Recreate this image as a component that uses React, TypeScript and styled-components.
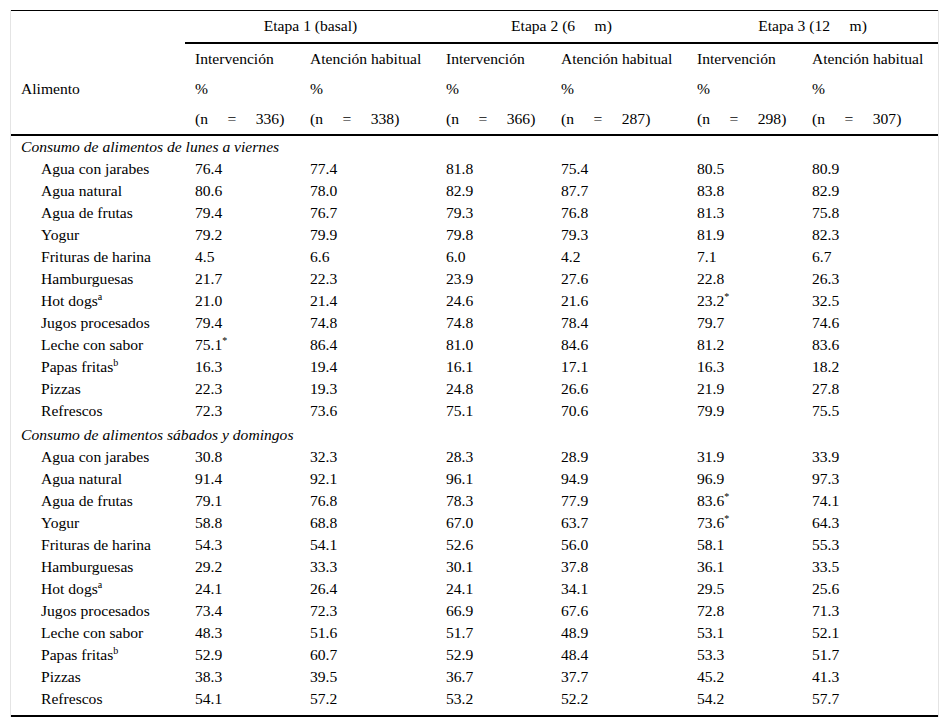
import styled, { createGlobalStyle } from "styled-components";

const GlobalStyle = createGlobalStyle`
  html, body {
    margin: 0;
    padding: 0;
    background: #ffffff;
  }
  body {
    font-family: "Liberation Serif", "Times New Roman", serif;
    color: #000000;
  }
`;

const Page = styled.div`
  padding: 10px 10px 0 10px;
  width: 949px;
  box-sizing: border-box;
`;

const Frame = styled.div`
  border-left: 1px solid #e4e4e4;
  border-right: 1px solid #e4e4e4;
`;

const Table = styled.table`
  width: 100%;
  border-collapse: collapse;
  font-size: 15.6px;
  line-height: 18px;
  border-top: 1px solid #000;
  border-bottom: 2px solid #000;
  table-layout: fixed;

  tbody tr:last-child td {
    padding-bottom: 7px;
  }
`;

const HeadCell = styled.th<{ $center?: boolean; $rule?: boolean; $top?: boolean }>`
  font-weight: normal;
  text-align: ${(p) => (p.$center ? "center" : "left")};
  vertical-align: middle;
  padding: ${(p) => (p.$top ? "6px 10px 7px" : "6px 10px")};
  height: 18px;
  white-space: pre;
  border-bottom: ${(p) => (p.$rule ? "2px solid #000" : "none")};
`;

const HeadRow = styled.tr<{ $last?: boolean }>`
  border-bottom: ${(p) => (p.$last ? "2px solid #000" : "none")};
`;

const SectionCell = styled.td<{ $gap?: boolean }>`
  font-style: italic;
  padding: ${(p) => (p.$gap ? "4px" : "2px")} 10px 2px 10px;
`;

const Cell = styled.td`
  padding: 2px 10px;
  white-space: nowrap;
`;

const LabelCell = styled(Cell)`
  padding-left: 30px;
`;

const Sup = styled.sup`
  font-size: 10px;
  line-height: 0;
  vertical-align: 6px;
`;

type Row = { name: string; mark?: string; values: string[] };

const weekdays: Row[] = [
  { name: "Agua con jarabes", values: ["76.4", "77.4", "81.8", "75.4", "80.5", "80.9"] },
  { name: "Agua natural", values: ["80.6", "78.0", "82.9", "87.7", "83.8", "82.9"] },
  { name: "Agua de frutas", values: ["79.4", "76.7", "79.3", "76.8", "81.3", "75.8"] },
  { name: "Yogur", values: ["79.2", "79.9", "79.8", "79.3", "81.9", "82.3"] },
  { name: "Frituras de harina", values: ["4.5", "6.6", "6.0", "4.2", "7.1", "6.7"] },
  { name: "Hamburguesas", values: ["21.7", "22.3", "23.9", "27.6", "22.8", "26.3"] },
  { name: "Hot dogs", mark: "a", values: ["21.0", "21.4", "24.6", "21.6", "23.2*", "32.5"] },
  { name: "Jugos procesados", values: ["79.4", "74.8", "74.8", "78.4", "79.7", "74.6"] },
  { name: "Leche con sabor", values: ["75.1*", "86.4", "81.0", "84.6", "81.2", "83.6"] },
  { name: "Papas fritas", mark: "b", values: ["16.3", "19.4", "16.1", "17.1", "16.3", "18.2"] },
  { name: "Pizzas", values: ["22.3", "19.3", "24.8", "26.6", "21.9", "27.8"] },
  { name: "Refrescos", values: ["72.3", "73.6", "75.1", "70.6", "79.9", "75.5"] },
];

const weekend: Row[] = [
  { name: "Agua con jarabes", values: ["30.8", "32.3", "28.3", "28.9", "31.9", "33.9"] },
  { name: "Agua natural", values: ["91.4", "92.1", "96.1", "94.9", "96.9", "97.3"] },
  { name: "Agua de frutas", values: ["79.1", "76.8", "78.3", "77.9", "83.6*", "74.1"] },
  { name: "Yogur", values: ["58.8", "68.8", "67.0", "63.7", "73.6*", "64.3"] },
  { name: "Frituras de harina", values: ["54.3", "54.1", "52.6", "56.0", "58.1", "55.3"] },
  { name: "Hamburguesas", values: ["29.2", "33.3", "30.1", "37.8", "36.1", "33.5"] },
  { name: "Hot dogs", mark: "a", values: ["24.1", "26.4", "24.1", "34.1", "29.5", "25.6"] },
  { name: "Jugos procesados", values: ["73.4", "72.3", "66.9", "67.6", "72.8", "71.3"] },
  { name: "Leche con sabor", values: ["48.3", "51.6", "51.7", "48.9", "53.1", "52.1"] },
  { name: "Papas fritas", mark: "b", values: ["52.9", "60.7", "52.9", "48.4", "53.3", "51.7"] },
  { name: "Pizzas", values: ["38.3", "39.5", "36.7", "37.7", "45.2", "41.3"] },
  { name: "Refrescos", values: ["54.1", "57.2", "53.2", "52.2", "54.2", "57.7"] },
];

const counts = ["336", "338", "366", "287", "298", "307"];
const groups = ["Intervención", "Atención habitual"];

const Value = ({ v }: { v: string }) => {
  if (v.endsWith("*")) {
    return (
      <>
        {v.slice(0, -1)}
        <Sup>*</Sup>
      </>
    );
  }
  return <>{v}</>;
};

const Section = ({ title, rows, gap }: { title: string; rows: Row[]; gap?: boolean }) => (
  <>
    <tr>
      <SectionCell colSpan={7} $gap={gap}>
        {title}
      </SectionCell>
    </tr>
    {rows.map((r) => (
      <tr key={title + r.name}>
        <LabelCell>
          {r.name}
          {r.mark && <Sup>{r.mark}</Sup>}
        </LabelCell>
        {r.values.map((v, i) => (
          <Cell key={i}>
            <Value v={v} />
          </Cell>
        ))}
      </tr>
    ))}
  </>
);

const App = () => {
  return (
    <Page>
      <GlobalStyle />
      <Frame>
        <Table>
          <colgroup>
            <col style={{ width: 174 }} />
            <col style={{ width: 115 }} />
            <col style={{ width: 136 }} />
            <col style={{ width: 115 }} />
            <col style={{ width: 136 }} />
            <col style={{ width: 115 }} />
            <col />
          </colgroup>
          <thead>
            <tr>
              <HeadCell $top />
              <HeadCell colSpan={2} $center $rule $top>
                Etapa 1 (basal)
              </HeadCell>
              <HeadCell colSpan={2} $center $rule $top>
                {"Etapa 2 (6     m)"}
              </HeadCell>
              <HeadCell colSpan={2} $center $rule $top>
                {"Etapa 3 (12     m)"}
              </HeadCell>
            </tr>
            <tr>
              <HeadCell rowSpan={3}>Alimento</HeadCell>
              {counts.map((_, i) => (
                <HeadCell key={i}>{groups[i % 2]}</HeadCell>
              ))}
            </tr>
            <tr>
              {counts.map((_, i) => (
                <HeadCell key={i}>%</HeadCell>
              ))}
            </tr>
            <HeadRow $last>
              {counts.map((n) => (
                <HeadCell key={n}>{`(n     =     ${n})`}</HeadCell>
              ))}
            </HeadRow>
          </thead>
          <tbody>
            <Section title="Consumo de alimentos de lunes a viernes" rows={weekdays} />
            <Section title="Consumo de alimentos sábados y domingos" rows={weekend} gap />
          </tbody>
        </Table>
      </Frame>
    </Page>
  );
};

export default App;
